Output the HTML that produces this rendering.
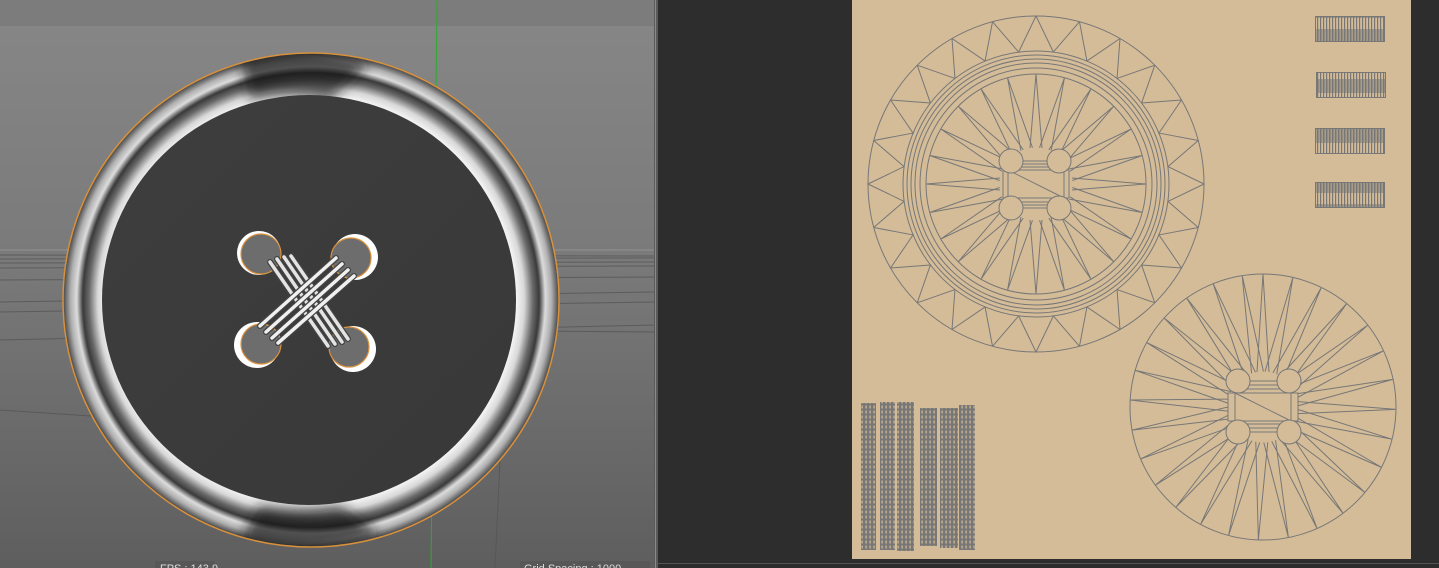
<!DOCTYPE html>
<html><head><meta charset="utf-8"><style>
html,body{margin:0;padding:0;width:1439px;height:568px;overflow:hidden;background:#2d2d2d;font-family:"Liberation Sans",sans-serif}
svg{position:absolute;left:0;top:0}
</style></head><body>
<svg width="1439" height="568" viewBox="0 0 1439 568" xmlns="http://www.w3.org/2000/svg">
<defs>
<linearGradient id="bg" x1="0" y1="0" x2="0" y2="1">
<stop offset="0" stop-color="#878787"/><stop offset="0.45" stop-color="#7a7a7a"/><stop offset="1" stop-color="#5e5e5e"/>
</linearGradient>
<radialGradient id="ring" cx="0.5" cy="0.5" r="0.5">
<stop offset="0.83" stop-color="#f2f2f2"/>
<stop offset="0.86" stop-color="#d8d8d8"/>
<stop offset="0.895" stop-color="#6a6a6a"/>
<stop offset="0.92" stop-color="#3a3a3a"/>
<stop offset="0.945" stop-color="#dcdcdc"/>
<stop offset="0.97" stop-color="#b0b0b0"/>
<stop offset="1" stop-color="#444"/>
</radialGradient>
<linearGradient id="disc" x1="0" y1="0" x2="1" y2="1">
<stop offset="0" stop-color="#3e3e3e"/><stop offset="1" stop-color="#383838"/>
</linearGradient>
<filter id="bl" x="-20%" y="-50%" width="140%" height="200%"><feGaussianBlur stdDeviation="6"/></filter>
<pattern id="vl" width="4" height="5" patternUnits="userSpaceOnUse">
<rect width="4" height="5" fill="#777"/><rect x="1.5" y="0.5" width="1.2" height="3" fill="#d4bc98"/>
</pattern>
<pattern id="vs" width="3" height="25" patternUnits="userSpaceOnUse">
<rect width="3" height="25" fill="#d4bc98"/><rect width="1.2" height="25" fill="#777"/><rect x="1.5" y="4" width="1" height="14" fill="#777"/>
</pattern>
<clipPath id="rc"><ellipse cx="311" cy="300" rx="248" ry="247"/></clipPath>
</defs>

<rect x="0" y="0" width="655" height="568" fill="url(#bg)"/>
<rect x="0" y="0" width="655" height="26" fill="#7c7c7c"/>
<g stroke="#555" stroke-width="1" fill="none" opacity="0.8">
<line x1="0" y1="250" x2="655" y2="250" stroke="#999"/>
<line x1="0" y1="255" x2="655" y2="256"/>
<line x1="0" y1="259" x2="655" y2="258"/>
<line x1="0" y1="263" x2="655" y2="262"/>
<line x1="0" y1="268" x2="655" y2="266"/>
<line x1="0" y1="280" x2="655" y2="277"/>
<line x1="0" y1="302" x2="655" y2="292"/>
<line x1="0" y1="312" x2="655" y2="302"/>
<line x1="0" y1="340" x2="655" y2="325"/>
<line x1="420" y1="330" x2="655" y2="332"/>
<line x1="0" y1="410" x2="150" y2="420"/>
<line x1="500" y1="460" x2="495" y2="568"/>
</g>
<line x1="437" y1="0" x2="431" y2="568" stroke="#2eaa2e" stroke-width="1"/>

<ellipse cx="311" cy="300" rx="248" ry="247" fill="url(#ring)"/>
<g clip-path="url(#rc)">
<path d="M240 58 Q300 40 370 64 L330 100 Q290 90 250 100 Z" fill="#151515" opacity="0.7" filter="url(#bl)"/>
<path d="M240 540 Q310 560 380 534 L340 505 Q300 512 260 505 Z" fill="#151515" opacity="0.7" filter="url(#bl)"/>
</g>
<ellipse cx="311" cy="300" rx="248" ry="247" fill="none" stroke="#d8913c" stroke-width="1.5"/>
<ellipse cx="309" cy="300" rx="207" ry="205" fill="url(#disc)"/>

<g stroke="#d8913c" stroke-width="1.2">
<circle cx="259" cy="253" r="22" fill="#fff" stroke="none"/><circle cx="261" cy="254" r="20" fill="#6d6d6d"/>
<circle cx="355" cy="257" r="23" fill="#fff" stroke="none"/><circle cx="351" cy="258" r="20" fill="#6d6d6d"/>
<circle cx="257" cy="345" r="23" fill="#fff" stroke="none"/><circle cx="261" cy="344" r="20" fill="#6d6d6d"/>
<circle cx="353" cy="349" r="23" fill="#fff" stroke="none"/><circle cx="349" cy="347" r="20" fill="#6d6d6d"/>
</g>
<g stroke-linecap="round">
<g stroke="#444" stroke-width="6">
<line x1="270" y1="262" x2="328" y2="346"/><line x1="277" y1="259" x2="335" y2="344"/><line x1="284" y1="257" x2="342" y2="342"/><line x1="291" y1="256" x2="348" y2="339"/>
</g>
<g stroke="#e4e4e4" stroke-width="3.5">
<line x1="270" y1="262" x2="328" y2="346"/><line x1="277" y1="259" x2="335" y2="344"/><line x1="284" y1="257" x2="342" y2="342"/><line x1="291" y1="256" x2="348" y2="339"/>
</g>
<g stroke="#444" stroke-width="6">
<line x1="336" y1="258" x2="260" y2="326"/><line x1="342" y1="264" x2="266" y2="332"/><line x1="348" y1="270" x2="272" y2="338"/><line x1="354" y1="276" x2="278" y2="343"/>
</g>
<g stroke="#f0f0f0" stroke-width="3.5">
<line x1="336" y1="258" x2="260" y2="326"/><line x1="342" y1="264" x2="266" y2="332"/><line x1="348" y1="270" x2="272" y2="338"/><line x1="354" y1="276" x2="278" y2="343"/>
</g>
</g>

<rect x="155" y="561" width="60" height="7" fill="#575757"/>
<text x="160" y="572" font-size="11" fill="#ddd">FPS : 143.9</text>
<rect x="520" y="561" width="130" height="7" fill="#575757"/>
<text x="524" y="572" font-size="11" fill="#ddd">Grid Spacing : 1000</text>

<rect x="654" y="0" width="4" height="568" fill="#5a5a5a"/>
<rect x="655" y="0" width="1" height="568" fill="#8a8a8a"/>
<rect x="658" y="563" width="781" height="1" fill="#555"/>

<rect x="852" y="0" width="559" height="559" fill="#d4bc98"/>
<g stroke="#777" stroke-width="1" fill="none">
<circle cx="1036" cy="184" r="168"/>
<circle cx="1036" cy="184" r="133"/>
<circle cx="1036" cy="184" r="129"/>
<circle cx="1036" cy="184" r="125"/>
<circle cx="1036" cy="184" r="121"/>
<circle cx="1036" cy="184" r="116"/>
<circle cx="1036" cy="184" r="110"/>
<g id="zz">
<path d="M1036 16 L1053.4 52.1 M1036 16 L1018.6 52.1"/>
<path d="M1036 74 L1030 148 M1036 74 L1042 148"/>
</g>
<use href="#zz" transform="rotate(15 1036 184)"/><use href="#zz" transform="rotate(30 1036 184)"/><use href="#zz" transform="rotate(45 1036 184)"/>
<use href="#zz" transform="rotate(60 1036 184)"/><use href="#zz" transform="rotate(75 1036 184)"/><use href="#zz" transform="rotate(90 1036 184)"/>
<use href="#zz" transform="rotate(105 1036 184)"/><use href="#zz" transform="rotate(120 1036 184)"/><use href="#zz" transform="rotate(135 1036 184)"/>
<use href="#zz" transform="rotate(150 1036 184)"/><use href="#zz" transform="rotate(165 1036 184)"/><use href="#zz" transform="rotate(180 1036 184)"/>
<use href="#zz" transform="rotate(195 1036 184)"/><use href="#zz" transform="rotate(210 1036 184)"/><use href="#zz" transform="rotate(225 1036 184)"/>
<use href="#zz" transform="rotate(240 1036 184)"/><use href="#zz" transform="rotate(255 1036 184)"/><use href="#zz" transform="rotate(270 1036 184)"/>
<use href="#zz" transform="rotate(285 1036 184)"/><use href="#zz" transform="rotate(300 1036 184)"/><use href="#zz" transform="rotate(315 1036 184)"/>
<use href="#zz" transform="rotate(330 1036 184)"/><use href="#zz" transform="rotate(345 1036 184)"/>
<rect x="1003" y="170" width="66" height="28" fill="#d4bc98"/>
<rect x="1008" y="170" width="56" height="28"/>
<path d="M1008 170 L1064 198 M1018 161 H1052 M1018 208 H1052 M1018 164 H1052 M1018 167 H1052 M1018 205 H1052 M1018 202 H1052"/>
<circle cx="1011" cy="161" r="12" fill="#d4bc98"/><circle cx="1059" cy="161" r="12" fill="#d4bc98"/>
<circle cx="1011" cy="208" r="12" fill="#d4bc98"/><circle cx="1059" cy="208" r="12" fill="#d4bc98"/>

<circle cx="1263" cy="407" r="133"/>
<g id="sp"><path d="M1263 274 L1257 372 M1263 274 L1269 372"/></g>
<use href="#sp" transform="rotate(13 1263 407)"/><use href="#sp" transform="rotate(26 1263 407)"/><use href="#sp" transform="rotate(39 1263 407)"/>
<use href="#sp" transform="rotate(52 1263 407)"/><use href="#sp" transform="rotate(65 1263 407)"/><use href="#sp" transform="rotate(78 1263 407)"/>
<use href="#sp" transform="rotate(91 1263 407)"/><use href="#sp" transform="rotate(104 1263 407)"/><use href="#sp" transform="rotate(117 1263 407)"/>
<use href="#sp" transform="rotate(130 1263 407)"/><use href="#sp" transform="rotate(143 1263 407)"/><use href="#sp" transform="rotate(156 1263 407)"/>
<use href="#sp" transform="rotate(169 1263 407)"/><use href="#sp" transform="rotate(182 1263 407)"/><use href="#sp" transform="rotate(195 1263 407)"/>
<use href="#sp" transform="rotate(208 1263 407)"/><use href="#sp" transform="rotate(221 1263 407)"/><use href="#sp" transform="rotate(234 1263 407)"/>
<use href="#sp" transform="rotate(247 1263 407)"/><use href="#sp" transform="rotate(260 1263 407)"/><use href="#sp" transform="rotate(273 1263 407)"/>
<use href="#sp" transform="rotate(286 1263 407)"/><use href="#sp" transform="rotate(299 1263 407)"/><use href="#sp" transform="rotate(312 1263 407)"/>
<use href="#sp" transform="rotate(325 1263 407)"/><use href="#sp" transform="rotate(338 1263 407)"/><use href="#sp" transform="rotate(351 1263 407)"/>
<rect x="1228" y="393" width="70" height="28" fill="#d4bc98"/>
<rect x="1235" y="393" width="56" height="28"/>
<path d="M1235 393 L1291 421 M1245 381 H1280 M1245 432 H1280 M1245 385 H1280 M1245 389 H1280 M1245 428 H1280 M1245 424 H1280"/>
<circle cx="1238" cy="381" r="12" fill="#d4bc98"/><circle cx="1289" cy="381" r="12" fill="#d4bc98"/>
<circle cx="1238" cy="432" r="12" fill="#d4bc98"/><circle cx="1289" cy="432" r="12" fill="#d4bc98"/>
</g>

<g stroke="#777" stroke-width="1">
<rect x="1315.5" y="16.5" width="69" height="25" fill="url(#vs)"/>
<rect x="1316.5" y="72.5" width="69" height="25" fill="url(#vs)"/>
<rect x="1315.5" y="128.5" width="69" height="25" fill="url(#vs)"/>
<rect x="1315.5" y="182.5" width="69" height="25" fill="url(#vs)"/>
</g>
<g fill="url(#vl)">
<rect x="861" y="403" width="15" height="147"/>
<rect x="880" y="402" width="15" height="148"/>
<rect x="897" y="402" width="17" height="149"/>
<rect x="920" y="408" width="17" height="138"/>
<rect x="940" y="408" width="18" height="140"/>
<rect x="959" y="405" width="16" height="145"/>
</g>
</svg>
</body></html>
